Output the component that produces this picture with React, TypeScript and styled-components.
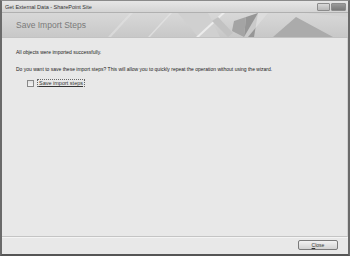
import React from 'react';
import styled, { createGlobalStyle } from 'styled-components';

const GlobalStyle = createGlobalStyle`
    html, body {
        margin: 0;
        padding: 0;
        background: #ffffff;
    }
    body {
        font-family: "Liberation Sans", Arial, sans-serif;
    }
`;

const Window = styled.div`
    width: 350px;
    height: 256px;
    box-sizing: border-box;
    display: flex;
    flex-direction: column;
    background: #e4e4e4;
    border-left: 2px solid #6a6a6a;
    border-right: 2px solid #6a6a6a;
    border-bottom: 2px solid #555555;
    border-top: 1px solid #8a8a8a;
`;

const TitleBar = styled.div`
    height: 11px;
    display: flex;
    align-items: center;
    justify-content: space-between;
    padding: 0 2px 0 3px;
    background: linear-gradient(#e6e6e6, #d4d4d4);
    border-bottom: 1px solid #b0b0b0;
`;

const TitleText = styled.span`
    font-size: 5.5px;
    color: #333;
`;

const Controls = styled.div`
    display: flex;
    gap: 1px;
`;

const ControlButton = styled.div<{ $dark?: boolean }>`
    width: ${(p) => (p.$dark ? 13 : 11)}px;
    height: 6px;
    border: 1px solid #8c8c8c;
    border-radius: 1px;
    background: ${(p) => (p.$dark ? 'linear-gradient(#9a9a9a, #7a7a7a)' : 'linear-gradient(#d8d8d8, #b8b8b8)')};
`;

const Header = styled.div`
    position: relative;
    height: 24px;
    display: flex;
    align-items: center;
    padding-left: 14px;
    background: linear-gradient(#d8d8d8, #c8c8c8);
    border-bottom: 1px solid #c2c2c2;
    overflow: hidden;
`;

const HeaderTitle = styled.span`
    position: relative;
    font-size: 8.5px;
    color: #7a7a7a;
    z-index: 1;
`;

const HeaderArt = styled.svg`
    position: absolute;
    right: 0;
    top: 0;
`;

const Body = styled.div`
    flex: 1;
    display: flex;
    flex-direction: column;
    padding: 11px 14px 0 14px;
    background: #e8e8e8;
    border-bottom: 1px solid #c4c4c4;
    border-right: 1px solid #d2d2d2;
`;

const Line = styled.p<{ $gap?: number }>`
    margin: ${(p) => p.$gap ?? 0}px 0 0 0;
    font-size: 5px;
    color: #222;
    line-height: 7px;
    white-space: nowrap;
`;

const CheckRow = styled.label`
    display: flex;
    align-items: center;
    gap: 3px;
    margin: 6px 0 0 11px;
    font-size: 5.5px;
    color: #333;
`;

const Box = styled.span`
    width: 5px;
    height: 5px;
    border: 1px solid #888;
    background: linear-gradient(#e0e0e0, #f4f4f4);
`;

const Underlined = styled.span`
    text-decoration: underline;
    border: 1px dotted #666;
    padding: 0 1px;
    line-height: 6px;
`;

const Footer = styled.div`
    height: 17px;
    display: flex;
    align-items: flex-start;
    justify-content: flex-end;
    padding: 2px 10px 0 0;
    box-sizing: border-box;
    background: #e8e8e8;
    border-top: 1px solid #f4f4f4;
`;

const CloseButton = styled.div`
    width: 38px;
    height: 8px;
    border: 1px solid #7a7a7a;
    border-radius: 2px;
    background: linear-gradient(#f2f2f2, #d2d2d2);
    display: flex;
    align-items: center;
    justify-content: center;
    font-size: 5px;
    color: #333;
`;

export default function App() {
    return (
        <>
            <GlobalStyle />
            <Window>
                <TitleBar>
                    <TitleText>Get External Data - SharePoint Site</TitleText>
                    <Controls>
                        <ControlButton />
                        <ControlButton $dark />
                    </Controls>
                </TitleBar>
                <Header>
                    <HeaderTitle>Save Import Steps</HeaderTitle>
                    <HeaderArt width="240" height="24" viewBox="0 0 240 24">
                        <polygon points="0,24 22,0 25,0 3,24" fill="#e2e2e2" opacity="0.6" />
                        <polygon points="40,24 62,0 64,0 42,24" fill="#e6e6e6" opacity="0.7" />
                        <polygon points="70,0 100,0 112,24 90,24" fill="#d0d0d0" />
                        <polygon points="88,24 114,0 117,0 91,24" fill="#ececec" />
                        <polygon points="110,4 125,20 120,24 104,8" fill="#c2c2c2" />
                        <polygon points="126,8 138,4 136,24 124,18" fill="#a4a4a4" />
                        <polygon points="138,4 150,0 146,24 136,24" fill="#969696" />
                        <polygon points="150,0 160,0 140,24 136,24" fill="#e0e0e0" opacity="0.7" />
                        <polygon points="165,24 188,4 225,24" fill="#ababab" />
                        <polygon points="196,0 240,0 240,4" fill="#d2d2d2" />
                    </HeaderArt>
                </Header>
                <Body>
                    <Line>All objects were imported successfully.</Line>
                    <Line $gap={10}>
                        Do you want to save these import steps? This will allow you to quickly repeat the operation without using the wizard.
                    </Line>
                    <CheckRow>
                        <Box />
                        <Underlined>Save import steps</Underlined>
                    </CheckRow>
                </Body>
                <Footer>
                    <CloseButton>
                        <u>C</u>lose
                    </CloseButton>
                </Footer>
            </Window>
        </>
    );
}
